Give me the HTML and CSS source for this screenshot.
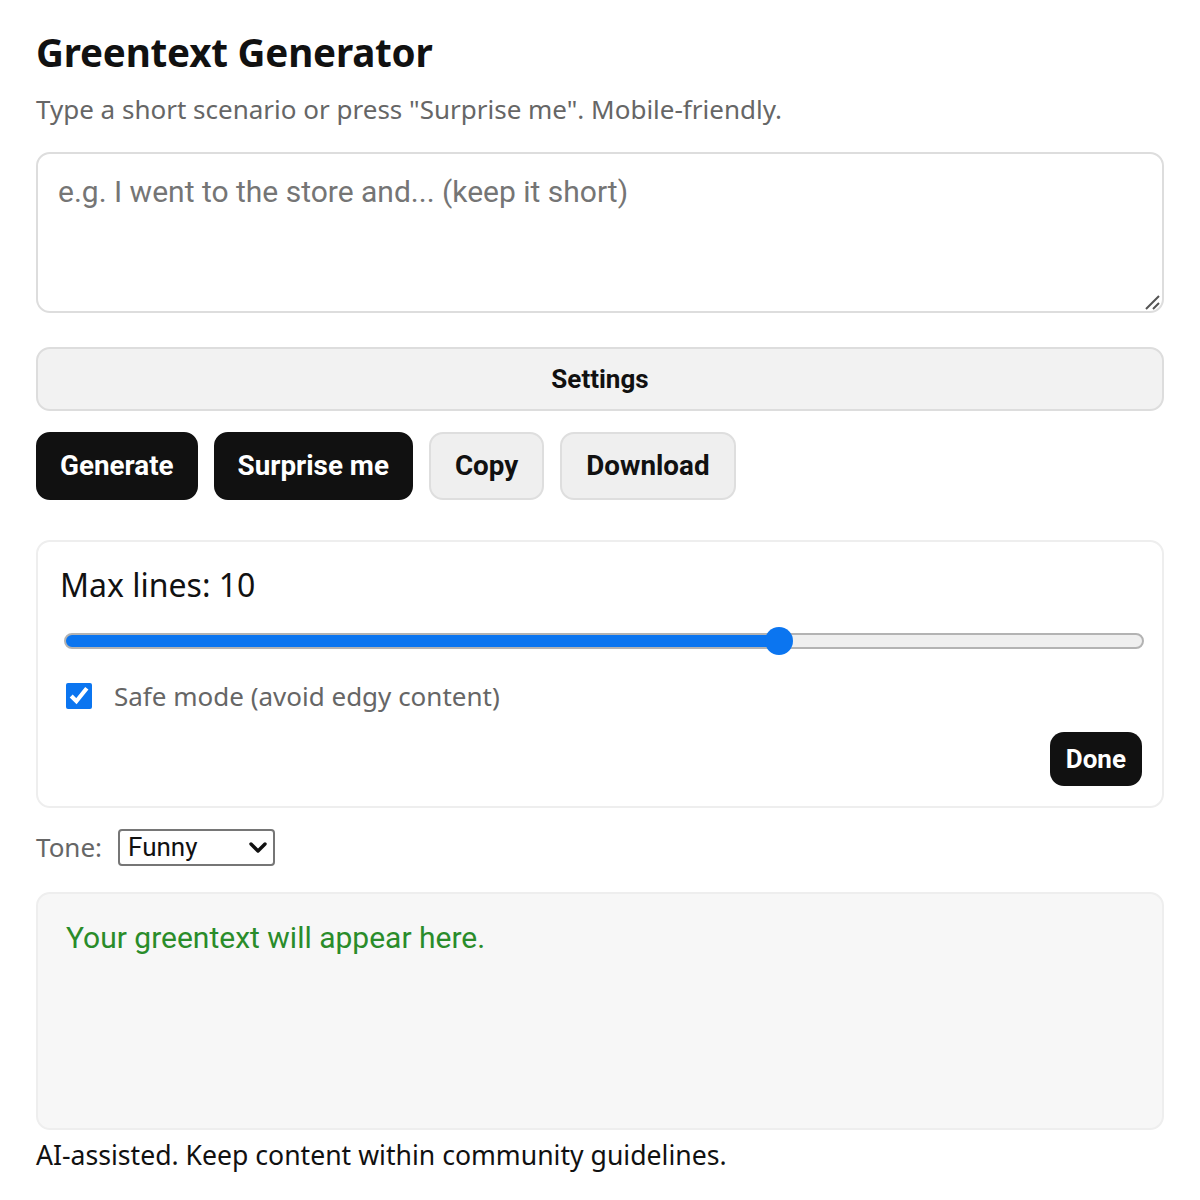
FILE: index.html
```html
<!DOCTYPE html>
<html lang="en">
<head>
  <meta charset="UTF-8" />
  <meta name="viewport" content="width=device-width, initial-scale=1.0"/>
  <title>Greentext Generator</title>
  <link rel="stylesheet" href="styles.css">
</head>
<body>
  <main class="app">
    <h1 class="title">Greentext Generator</h1>
    <p class="subtitle">Type a short scenario or press "Surprise me". Mobile-friendly.</p>

    <div class="prompt-wrap">
      <textarea class="prompt" placeholder="e.g. I went to the store and... (keep it short)"></textarea>
      <svg class="grip" width="16" height="16" viewBox="0 0 16 16" aria-hidden="true">
        <path d="M2 15 L15 2 M9 15 L15 9" stroke="#555" stroke-width="2" fill="none"/>
      </svg>
    </div>

    <button class="settings-toggle">Settings</button>

    <div class="actions">
      <button class="btn btn-dark">Generate</button>
      <button class="btn btn-dark">Surprise me</button>
      <button class="btn btn-light">Copy</button>
      <button class="btn btn-light">Download</button>
    </div>

    <section class="settings">
      <label class="max-label" for="max-lines">Max lines: <span>10</span></label>
      <input id="max-lines" class="range" type="range" min="0" max="15" value="10">
      <label class="safe">
        <input type="checkbox" class="check" checked>
        Safe mode (avoid edgy content)
      </label>
      <div class="settings-foot">
        <button class="btn-done">Done</button>
      </div>
    </section>

    <div class="tone">
      <label for="tone">Tone:</label>
      <span class="select-wrap">
        <select id="tone" class="tone-select">
          <option>Funny</option>
          <option>Wholesome</option>
          <option>Sad</option>
        </select>
        <svg class="chevron" width="18" height="12" viewBox="0 0 18 12" aria-hidden="true">
          <path d="M2 2 L9 9 L16 2" stroke="#111" stroke-width="3.4" fill="none" stroke-linecap="round" stroke-linejoin="round"/>
        </svg>
      </span>
    </div>

    <div class="output">
      <p class="output-text">Your greentext will appear here.</p>
    </div>

    <p class="note">AI-assisted. Keep content within community guidelines.</p>
  </main>
</body>
</html>
```

FILE: styles.css
```css
* {
  box-sizing: border-box;
}

body {
  margin: 0;
  padding: 0 36px;
  background: #ffffff;
  color: #111111;
  font-family: "Noto Sans", "Open Sans", sans-serif;
}

.app {
  display: flex;
  flex-direction: column;
}

.title {
  margin: 27px 0 0;
  font-size: 38.6px;
  font-weight: 700;
  line-height: 1.3;
  letter-spacing: -0.2px;
}

.subtitle {
  margin: 14px 0 0;
  font-size: 26px;
  line-height: 1.4;
  color: #666666;
}

.prompt-wrap {
  position: relative;
  margin-top: 24px;
}

.prompt {
  display: block;
  width: 100%;
  height: 161px;
  padding: 18px 20px;
  border: 2px solid #dddddd;
  border-radius: 14px;
  font-family: Roboto, sans-serif;
  font-size: 30px;
  line-height: 1.3;
  color: #111111;
  resize: none;
}

.prompt::placeholder {
  color: #757575;
}

.grip {
  position: absolute;
  right: 4px;
  bottom: 3px;
  pointer-events: none;
}

.settings-toggle {
  margin-top: 34px;
  height: 64px;
  width: 100%;
  border: 2px solid #dddddd;
  border-radius: 14px;
  background: #f2f2f2;
  color: #111111;
  font-family: Roboto, sans-serif;
  font-size: 26px;
  font-weight: 700;
  cursor: pointer;
}

.actions {
  display: flex;
  gap: 16px;
  margin-top: 21px;
}

.btn {
  height: 68px;
  border-radius: 14px;
  font-family: Roboto, sans-serif;
  font-size: 27.8px;
  font-weight: 700;
  cursor: pointer;
}

.btn-dark {
  padding: 0 22px;
  background: #111111;
  color: #ffffff;
  border: 2px solid #111111;
}

.btn-light {
  padding: 0 24px;
  background: #efefef;
  color: #111111;
  border: 2px solid #dedede;
}

.settings {
  margin-top: 40px;
  padding: 22px 20px 20px 22px;
  border: 2px solid #eeeeee;
  border-radius: 14px;
  display: flex;
  flex-direction: column;
}

.max-label {
  font-size: 32px;
  line-height: 1.3;
  color: #111111;
}

.range {
  -webkit-appearance: none;
  appearance: none;
  margin: 22px 0 0 4px;
  width: calc(100% - 2px);
  height: 28px;
  background: transparent;
}

.range::-webkit-slider-runnable-track {
  height: 16px;
  border: 2px solid #b3b3b3;
  border-radius: 8px;
  background: linear-gradient(to right, #0b75f0 66.7%, #efefef 66.7%);
}

.range::-webkit-slider-thumb {
  -webkit-appearance: none;
  width: 28px;
  height: 28px;
  margin-top: -8px;
  border-radius: 50%;
  background: #0b75f0;
}

.safe {
  display: flex;
  align-items: center;
  gap: 22px;
  margin-top: 23px;
  margin-left: 6px;
  font-size: 26px;
  line-height: 1.4;
  color: #666666;
}

.check {
  width: 26px;
  height: 26px;
  margin: 0;
  accent-color: #0b75f0;
}

.settings-foot {
  display: flex;
  justify-content: flex-end;
  margin-top: 17px;
}

.btn-done {
  height: 54px;
  padding: 0 16px;
  border: none;
  border-radius: 14px;
  background: #111111;
  color: #ffffff;
  font-family: Roboto, sans-serif;
  font-size: 26px;
  font-weight: 700;
  cursor: pointer;
}

.tone {
  display: flex;
  align-items: center;
  gap: 16px;
  margin-top: 21px;
  font-size: 26px;
  color: #666666;
}

.select-wrap {
  position: relative;
  display: inline-flex;
}

.tone-select {
  -webkit-appearance: none;
  appearance: none;
  width: 157px;
  height: 37px;
  padding: 0 8px;
  border: 2px solid #767676;
  border-radius: 4px;
  background: #ffffff;
  color: #111111;
  font-family: Roboto, sans-serif;
  font-size: 26px;
}

.chevron {
  position: absolute;
  right: 8px;
  top: 13px;
  pointer-events: none;
}

.output {
  margin-top: 26px;
  height: 238px;
  padding: 23px 28px;
  background: #f7f7f7;
  border: 2px solid #eeeeee;
  border-radius: 14px;
}

.output-text {
  margin: 0;
  font-family: Roboto, sans-serif;
  font-size: 30px;
  line-height: 1.4;
  color: #2a8c2a;
}

.note {
  margin: 7px 0 0;
  font-size: 26.6px;
  line-height: 1.4;
  color: #111111;
}
```
